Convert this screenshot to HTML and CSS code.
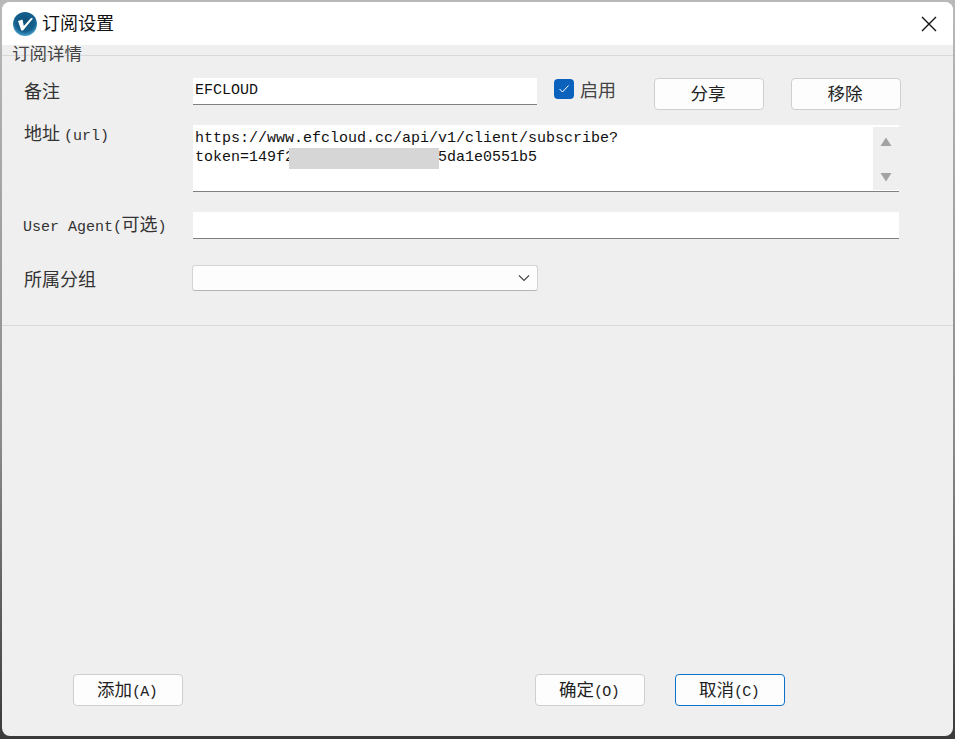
FILE: index.html
```html
<!DOCTYPE html>
<html lang="zh">
<head>
<meta charset="utf-8">
<title>订阅设置</title>
<link rel="stylesheet" href="styles.css">
</head>
<body>
<div class="window">
  <header class="titlebar">
    <svg class="logo" width="24" height="24" viewBox="0 0 24 24">
      <defs>
        <radialGradient id="lg" cx="50%" cy="40%" r="60%">
          <stop offset="0" stop-color="#0d4f78"/>
          <stop offset="0.7" stop-color="#15608f"/>
          <stop offset="1" stop-color="#4aa3cf"/>
        </radialGradient>
      </defs>
      <circle cx="12" cy="12" r="12" fill="url(#lg)"/>
      <path d="M5 9 L9.5 7.5 L10.8 14 L18 6 L20 6.5 L10 18.5 L8.3 18.5 Z" fill="#fff"/>
    </svg>
    <span class="title">订阅设置</span>
    <svg class="close" width="16" height="16" viewBox="0 0 16 16">
      <path d="M1 1 L15 15 M15 1 L1 15" stroke="#111" stroke-width="1.4" fill="none"/>
    </svg>
  </header>

  <section class="group">
    <div class="legend">订阅详情</div>

    <div class="row row-remark">
      <label class="label label-remark">备注</label>
      <div class="input input-remark"><span class="latin">EFCLOUD</span></div>
      <span class="checkbox">
        <svg width="12" height="10" viewBox="0 0 12 10"><path d="M1.5 5 L4.5 8 L10.5 1.5" stroke="#fff" stroke-width="1" fill="none"/></svg>
      </span>
      <span class="check-label">启用</span>
      <button class="btn btn-top">分享</button>
      <button class="btn btn-top btn-remove">移除</button>
    </div>

    <div class="row row-url">
      <label class="label label-url">地址 <span class="latin">(url)</span></label>
      <div class="textarea">
        <div class="latin text-url">https://www.efcloud.cc/api/v1/client/subscribe?<br>token=149f2<span class="gap"></span>5da1e0551b5</div>
        <div class="redact"></div>
        <div class="scrollbar">
          <svg width="12" height="10" viewBox="0 0 12 10"><path d="M6 0.5 L11.5 9 L0.5 9 Z" fill="#a3a3a3"/></svg>
          <svg width="12" height="10" viewBox="0 0 12 10"><path d="M0.5 1 L11.5 1 L6 9.5 Z" fill="#a3a3a3"/></svg>
        </div>
      </div>
    </div>

    <div class="row row-ua">
      <label class="label label-ua"><span class="latin">User Agent</span><span class="latin latin-tight">(</span>可选<span class="latin latin-tight">)</span></label>
      <div class="input input-ua"></div>
    </div>

    <div class="row row-group">
      <label class="label label-group">所属分组</label>
      <div class="combo">
        <svg width="12" height="8" viewBox="0 0 12 8"><path d="M1 1.5 L6 6.5 L11 1.5" stroke="#444" stroke-width="1.1" fill="none"/></svg>
      </div>
    </div>
  </section>

  <footer class="footer">
    <button class="btn"><span>添加</span><span class="latin latin-tight">(A)</span></button>
    <div class="footer-right">
      <button class="btn"><span>确定</span><span class="latin latin-tight">(O)</span></button>
      <button class="btn btn-focus"><span>取消</span><span class="latin latin-tight">(C)</span></button>
    </div>
  </footer>
</div>
</body>
</html>
```
FILE: styles.css
```css
* { box-sizing: border-box; }
html, body { margin: 0; height: 100%; }
body {
  width: 955px;
  height: 739px;
  overflow: hidden;
  padding: 2px 2px 3px 2px;
  background: linear-gradient(#b9b9b9 0, #8a8a8a 60%, #3a3a3a 100%);
  font-family: "Noto Sans CJK SC", "Liberation Mono", sans-serif;
  font-size: 18px;
  color: #333;
}
.latin {
  font-family: "Liberation Mono", monospace;
  font-size: 15px;
}
.latin-tight { letter-spacing: -0.6px; }
.window {
  width: 951px;
  height: 734px;
  display: flex;
  flex-direction: column;
  background: #efefef;
  border-radius: 8px;
  overflow: hidden;
}
.titlebar {
  height: 43px;
  flex: none;
  background: #fff;
  display: flex;
  align-items: center;
  padding: 0 16px 0 11px;
  color: #111;
}
.logo { flex: none; margin-top: 1px; }
.title { margin: 0 0 3px 5px; line-height: 24px; }
.close { margin-left: auto; margin-top: 1px; }

.group {
  position: relative;
  flex: none;
  margin-top: 10px;
  height: 271px;
  border-top: 1px solid #d9d9d9;
  border-bottom: 1px solid #d9d9d9;
  padding: 22px 0 0 21px;
}
.legend {
  position: absolute;
  left: 7px;
  top: -13px;
  padding: 0 3px;
  line-height: 20px;
  font-size: 17.5px;
  color: #444;
}
.row { display: flex; align-items: flex-start; }
.label {
  width: 170px;
  height: 24px;
  flex: none;
  line-height: 24px;
  color: #333;
}
.label-remark { padding-left: 1px; }
.label-url { padding-left: 1px; margin-top: -5px; }
.label-ua { white-space: nowrap; line-height: 22px; }
.label-group { padding: 1px 0 0 1px; }

.row-url { margin-top: 15px; }
.row-ua { margin-top: 20px; }
.row-group { margin-top: 26px; }

.input {
  height: 27px;
  background: #fff;
  border-bottom: 1px solid #808080;
  padding-left: 2px;
  line-height: 16px;
  color: #111;
}
.input-remark { width: 344px; }
.input-ua { width: 706px; }

.checkbox {
  width: 20px;
  height: 20px;
  flex: none;
  margin: 1px 0 0 17px;
  background: #0a62bd;
  border-radius: 4px;
  display: flex;
  align-items: center;
  justify-content: center;
}
.check-label {
  margin-left: 6px;
  width: 74px;
  flex: none;
  line-height: 22px;
  color: #444;
}

.btn {
  width: 110px;
  height: 32px;
  flex: none;
  padding: 0 2px 0 0;
  background: #fdfdfd;
  border: 1px solid #cfcfcf;
  border-radius: 4px;
  font-family: "Noto Sans CJK SC", sans-serif;
  font-size: 17.5px;
  line-height: 28px;
  color: #222;
}
.btn-top { padding: 0 2px 2px 0; }
.btn-remove { margin-left: 27px; }
.btn-focus { border-color: #0a73c9; }

.textarea {
  position: relative;
  width: 706px;
  height: 67px;
  background: #fff;
  border-bottom: 1px solid #808080;
  padding: 4px 0 0 2px;
  color: #111;
}
.text-url { line-height: 19px; white-space: nowrap; }
.gap { display: inline-block; width: 144px; }
.redact {
  position: absolute;
  left: 96px;
  top: 23px;
  width: 150px;
  height: 21px;
  background: #d6d6d6;
}
.scrollbar {
  position: absolute;
  right: 0;
  top: 2px;
  bottom: 1px;
  width: 26px;
  background: #efefef;
  display: flex;
  flex-direction: column;
  justify-content: space-between;
  align-items: center;
  padding: 10px 0 8px;
}

.combo {
  width: 346px;
  height: 26px;
  margin-left: -1px;
  background: #fdfdfd;
  border: 1px solid #d4d4d4;
  border-bottom-color: #b5b5b5;
  border-radius: 3px;
  display: flex;
  align-items: center;
  justify-content: flex-end;
  padding-right: 7px;
}

.footer {
  flex: 1;
  display: flex;
  justify-content: space-between;
  padding: 348px 168px 0 71px;
}
.footer-right { display: flex; gap: 30px; }
```
